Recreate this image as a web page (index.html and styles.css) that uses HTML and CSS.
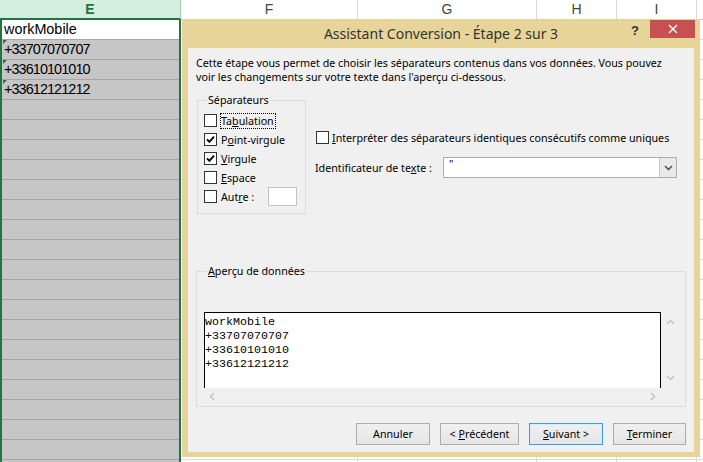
FILE: index.html
```html
<!DOCTYPE html>
<html lang="fr">
<head>
<meta charset="utf-8">
<title>Assistant Conversion</title>
<link rel="stylesheet" href="styles.css">
</head>
<body>
<div class="sheet">
  <div class="hdr">
    <div class="hc hc-e">E</div>
    <div class="hc hc-f">F</div>
    <div class="hc hc-g">G</div>
    <div class="hc hc-h">H</div>
    <div class="hc hc-i">I</div>
    <div class="hc hc-j"></div>
  </div>
  <div class="sbody">
    <div class="colE">
      <div class="cell active">workMobile</div>
      <div class="cell num">+33707070707</div>
      <div class="cell num">+33610101010</div>
      <div class="cell num">+33612121212</div>
      <div class="cell"></div><div class="cell"></div><div class="cell"></div><div class="cell"></div><div class="cell"></div><div class="cell"></div>
      <div class="cell"></div><div class="cell"></div><div class="cell"></div><div class="cell"></div><div class="cell"></div><div class="cell"></div>
      <div class="cell"></div><div class="cell"></div><div class="cell"></div><div class="cell"></div><div class="cell"></div><div class="cell"></div>
    </div>
    <div class="rest">
      <div class="gc gc-f"></div>
      <div class="gc gc-g"></div>
      <div class="gc gc-h"></div>
      <div class="gc gc-i"></div>
      <div class="gc gc-j"></div>
    </div>
  </div>
</div>

<div class="dlg">
  <div class="titlebar">
    <div class="tb-side"></div>
    <div class="title">Assistant Conversion - Étape 2 sur 3</div>
    <div class="tb-side tb-right">
      <span class="help">?</span>
      <span class="close"><svg width="10" height="10" viewBox="0 0 10 10"><path d="M1 1 L9 9 M9 1 L1 9" stroke="#fff" stroke-width="1.4" fill="none"/></svg></span>
    </div>
  </div>
  <div class="client">
    <p class="intro">Cette étape vous permet de choisir les séparateurs contenus dans vos données. Vous pouvez<br>voir les changements sur votre texte dans l'aperçu ci-dessous.</p>
    <div class="mid">
      <fieldset class="grp sepgrp">
        <legend>Séparateurs</legend>
        <div class="chkrow"><span class="cb"></span><span class="lbl focus">Ta<u>b</u>ulation</span></div>
        <div class="chkrow"><span class="cb"><svg width="11" height="11" viewBox="0 0 11 11"><path d="M2 5.3 L4.4 7.8 L9 2.6" stroke="#000" stroke-width="1.9" fill="none"/></svg></span><span class="lbl">P<u>o</u>int-virgule</span></div>
        <div class="chkrow"><span class="cb"><svg width="11" height="11" viewBox="0 0 11 11"><path d="M2 5.3 L4.4 7.8 L9 2.6" stroke="#000" stroke-width="1.9" fill="none"/></svg></span><span class="lbl"><u>V</u>irgule</span></div>
        <div class="chkrow"><span class="cb"></span><span class="lbl"><u>E</u>space</span></div>
        <div class="chkrow"><span class="cb"></span><span class="lbl">Aut<u>r</u>e :</span><span class="tbox"></span></div>
      </fieldset>
      <div class="opts">
        <div class="chkrow wide"><span class="cb"></span><span class="lbl"><u>I</u>nterpréter des séparateurs identiques consécutifs comme uniques</span></div>
        <div class="ident">
          <span class="ident-lbl">Identificateur de te<u>x</u>te :</span>
          <div class="combo">
            <span class="combo-val">"</span>
            <span class="combo-btn"><svg width="9" height="6" viewBox="0 0 9 6"><path d="M1 1 L4.5 4.5 L8 1" stroke="#555" stroke-width="1.6" fill="none"/></svg></span>
          </div>
        </div>
      </div>
    </div>
    <fieldset class="grp pvgrp">
      <legend><u>A</u>perçu de données</legend>
      <div class="pvrow">
        <div class="pvbox"><pre class="pvtext">workMobile
+33707070707
+33610101010
+33612121212</pre></div>
        <div class="vscroll">
          <svg width="9" height="6" viewBox="0 0 9 6"><path d="M1 5 L4.5 1.5 L8 5" stroke="#c2c2c2" stroke-width="1.5" fill="none"/></svg>
          <svg width="9" height="6" viewBox="0 0 9 6"><path d="M1 1 L4.5 4.5 L8 1" stroke="#c2c2c2" stroke-width="1.5" fill="none"/></svg>
        </div>
      </div>
      <div class="hscroll">
        <svg width="6" height="9" viewBox="0 0 6 9"><path d="M5 1 L1.5 4.5 L5 8" stroke="#c2c2c2" stroke-width="1.5" fill="none"/></svg>
        <svg width="6" height="9" viewBox="0 0 6 9"><path d="M1 1 L4.5 4.5 L1 8" stroke="#c2c2c2" stroke-width="1.5" fill="none"/></svg>
      </div>
    </fieldset>
    <div class="buttons">
      <button class="btn b-ann">Annuler</button>
      <button class="btn b-prev">&lt; <u>P</u>récédent</button>
      <button class="btn b-next default"><u>S</u>uivant &gt;</button>
      <button class="btn b-fin"><u>T</u>erminer</button>
    </div>
  </div>
</div>
</body>
</html>
```

FILE: styles.css
```css
html, body {
  margin: 0;
  padding: 0;
}
body {
  width: 703px;
  height: 462px;
  overflow: hidden;
  position: relative;
  background: #fff;
  font-family: "Liberation Sans", Arial, sans-serif;
}

/* ---------- spreadsheet ---------- */
.sheet {
  display: flex;
  flex-direction: column;
  height: 462px;
}
.hdr {
  display: flex;
  height: 20px;
  flex: none;
}
.hc {
  box-sizing: border-box;
  height: 20px;
  border-bottom: 1px solid #c8c8c8;
  border-right: 1px solid #dadada;
  color: #444;
  font-size: 14px;
  line-height: 19px;
  text-align: center;
  background: #fff;
}
.hc-e {
  width: 181px;
  background: #d3eedd;
  color: #217346;
  font-weight: bold;
  border-bottom: 2px solid #217346;
  border-right: 1px solid #9fd5b7;
  line-height: 18px;
}
.hc-f { width: 177px; }
.hc-g { width: 179px; }
.hc-h { width: 80px; }
.hc-i { width: 80px; }
.hc-j { flex: 1; border-right: none; }

.sbody {
  display: flex;
  flex: 1;
  overflow: hidden;
}
.colE {
  width: 181px;
  box-sizing: border-box;
  border-left: 2px solid #217346;
  border-right: 2px solid #217346;
  background: #c6c6c6;
  flex: none;
}
.cell {
  position: relative;
  height: 20px;
  box-sizing: border-box;
  border-bottom: 1px solid #a6a6a6;
  padding-left: 2px;
  font-size: 14.4px;
  line-height: 19px;
  color: #000;
  white-space: nowrap;
}
.cell.active {
  background: #fff;
}
.cell.num {
  letter-spacing: -0.9px;
}
.cell.num::before {
  content: "";
  position: absolute;
  left: 1px;
  top: 0;
  border-top: 4px solid #217346;
  border-right: 4px solid transparent;
}
.rest {
  flex: 1;
  display: flex;
  background: repeating-linear-gradient(to bottom, #fff 0 19px, #dadada 19px 20px);
}
.gc {
  box-sizing: border-box;
  border-right: 1px solid #dadada;
}
.gc-f { width: 177px; }
.gc-g { width: 179px; }
.gc-h { width: 80px; }
.gc-i { width: 80px; }
.gc-j { flex: 1; border-right: none; }

/* ---------- dialog ---------- */
.dlg {
  position: absolute;
  left: 182px;
  top: 19px;
  width: 518px;
  height: 438px;
  background: #e6d498;
  display: flex;
  flex-direction: column;
  font-family: "Noto Sans", "Open Sans", sans-serif;
  font-size: 10.7px;
  color: #000;
}
.titlebar {
  height: 29px;
  flex: none;
  display: grid;
  grid-template-columns: 1fr auto 1fr;
  align-items: start;
}
.title {
  font-size: 14px;
  line-height: 29px;
  color: #333;
  white-space: nowrap;
}
.tb-right {
  display: flex;
  justify-content: flex-end;
  align-items: flex-start;
  padding-right: 5px;
}
.help {
  font-family: "Liberation Sans", Arial, sans-serif;
  font-weight: bold;
  font-size: 13px;
  line-height: 20px;
  color: #333;
  margin-top: 2px;
  margin-right: 11px;
}
.close {
  width: 45px;
  height: 18px;
  margin-top: 1px;
  background: #c75050;
  display: flex;
  align-items: center;
  justify-content: center;
}

.client {
  flex: 1;
  margin: 0 6px 5px;
  background: #f0f0f0;
  padding: 8px 8px 0;
  display: flex;
  flex-direction: column;
}
.intro {
  margin: 0;
  line-height: 14px;
  white-space: nowrap;
}
.mid {
  display: flex;
  align-items: flex-start;
  margin-top: 9px;
}
.grp {
  margin: 0;
  min-width: 0;
  border: 1px solid #dcdcdc;
}
.grp legend {
  padding: 0 1px;
  margin-left: 3px;
  line-height: 14px;
}
.sepgrp {
  width: 109px;
  box-sizing: border-box;
  margin-left: 1px;
  padding: 4px 8px 7px 6px;
}
.chkrow {
  display: flex;
  align-items: center;
  height: 19px;
}
.cb {
  width: 13px;
  height: 13px;
  box-sizing: border-box;
  border: 1px solid #333;
  background: #fff;
  flex: none;
  display: flex;
  align-items: center;
  justify-content: center;
}
.lbl {
  margin-left: 4px;
  white-space: nowrap;
  line-height: 14px;
}
.focus {
  outline: 1px dotted #000;
  outline-offset: 0;
  padding-right: 1px;
}
.tbox {
  margin-left: auto;
  width: 29px;
  height: 19px;
  box-sizing: border-box;
  border: 1px solid #c3c3c3;
  background: #fff;
}

.opts {
  margin-left: 9px;
  padding-top: 35px;
}
.chkrow.wide .cb {
  margin-left: 1px;
}
.chkrow.wide .lbl {
  margin-left: 3px;
}
.ident {
  display: flex;
  align-items: center;
  margin-top: 10px;
}
.ident-lbl {
  width: 128px;
  white-space: nowrap;
}
.combo {
  width: 234px;
  height: 21px;
  box-sizing: border-box;
  border: 1px solid #abadb3;
  background: #fff;
  display: flex;
  align-items: stretch;
}
.combo-val {
  flex: 1;
  padding-left: 5px;
  line-height: 12px;
}
.combo-btn {
  width: 17px;
  box-sizing: border-box;
  border-left: 1px solid #c8c8c8;
  background: #e9e9e9;
  display: flex;
  align-items: center;
  justify-content: center;
}

.pvgrp {
  margin-top: 50px;
  padding: 34px 6px 1px 7px;
}
.pvrow {
  display: flex;
}
.pvbox {
  width: 457px;
  height: 76px;
  box-sizing: border-box;
  border: 1px solid #000;
  border-bottom: none;
  background: #fff;
  overflow: hidden;
}
.pvtext {
  margin: 0;
  padding: 2px 0 0 0;
  font-family: "Liberation Mono", "Courier New", monospace;
  font-size: 11.67px;
  line-height: 14px;
  color: #000;
}
.vscroll {
  width: 18px;
  height: 76px;
  box-sizing: border-box;
  padding: 7px 0 7px 0;
  display: flex;
  flex-direction: column;
  justify-content: space-between;
  align-items: center;
}
.hscroll {
  width: 457px;
  height: 17px;
  box-sizing: border-box;
  padding: 0 5px;
  display: flex;
  justify-content: space-between;
  align-items: center;
}

.buttons {
  display: flex;
  justify-content: flex-end;
  gap: 10px;
  margin-top: 16px;
}
.btn {
  height: 22px;
  box-sizing: border-box;
  border: 1px solid #adadad;
  background: linear-gradient(#f0f0f0, #e5e5e5);
  font-family: "Noto Sans", "Open Sans", sans-serif;
  font-size: 10.7px;
  color: #000;
  padding: 0;
  line-height: 18px;
}
.btn.default {
  border-color: #3c9ae6;
  box-shadow: inset 0 0 0 1px #d6ebfb;
}
.b-ann { width: 74px; }
.b-prev { width: 79px; }
.b-next { width: 74px; }
.b-fin { width: 73px; }
```
